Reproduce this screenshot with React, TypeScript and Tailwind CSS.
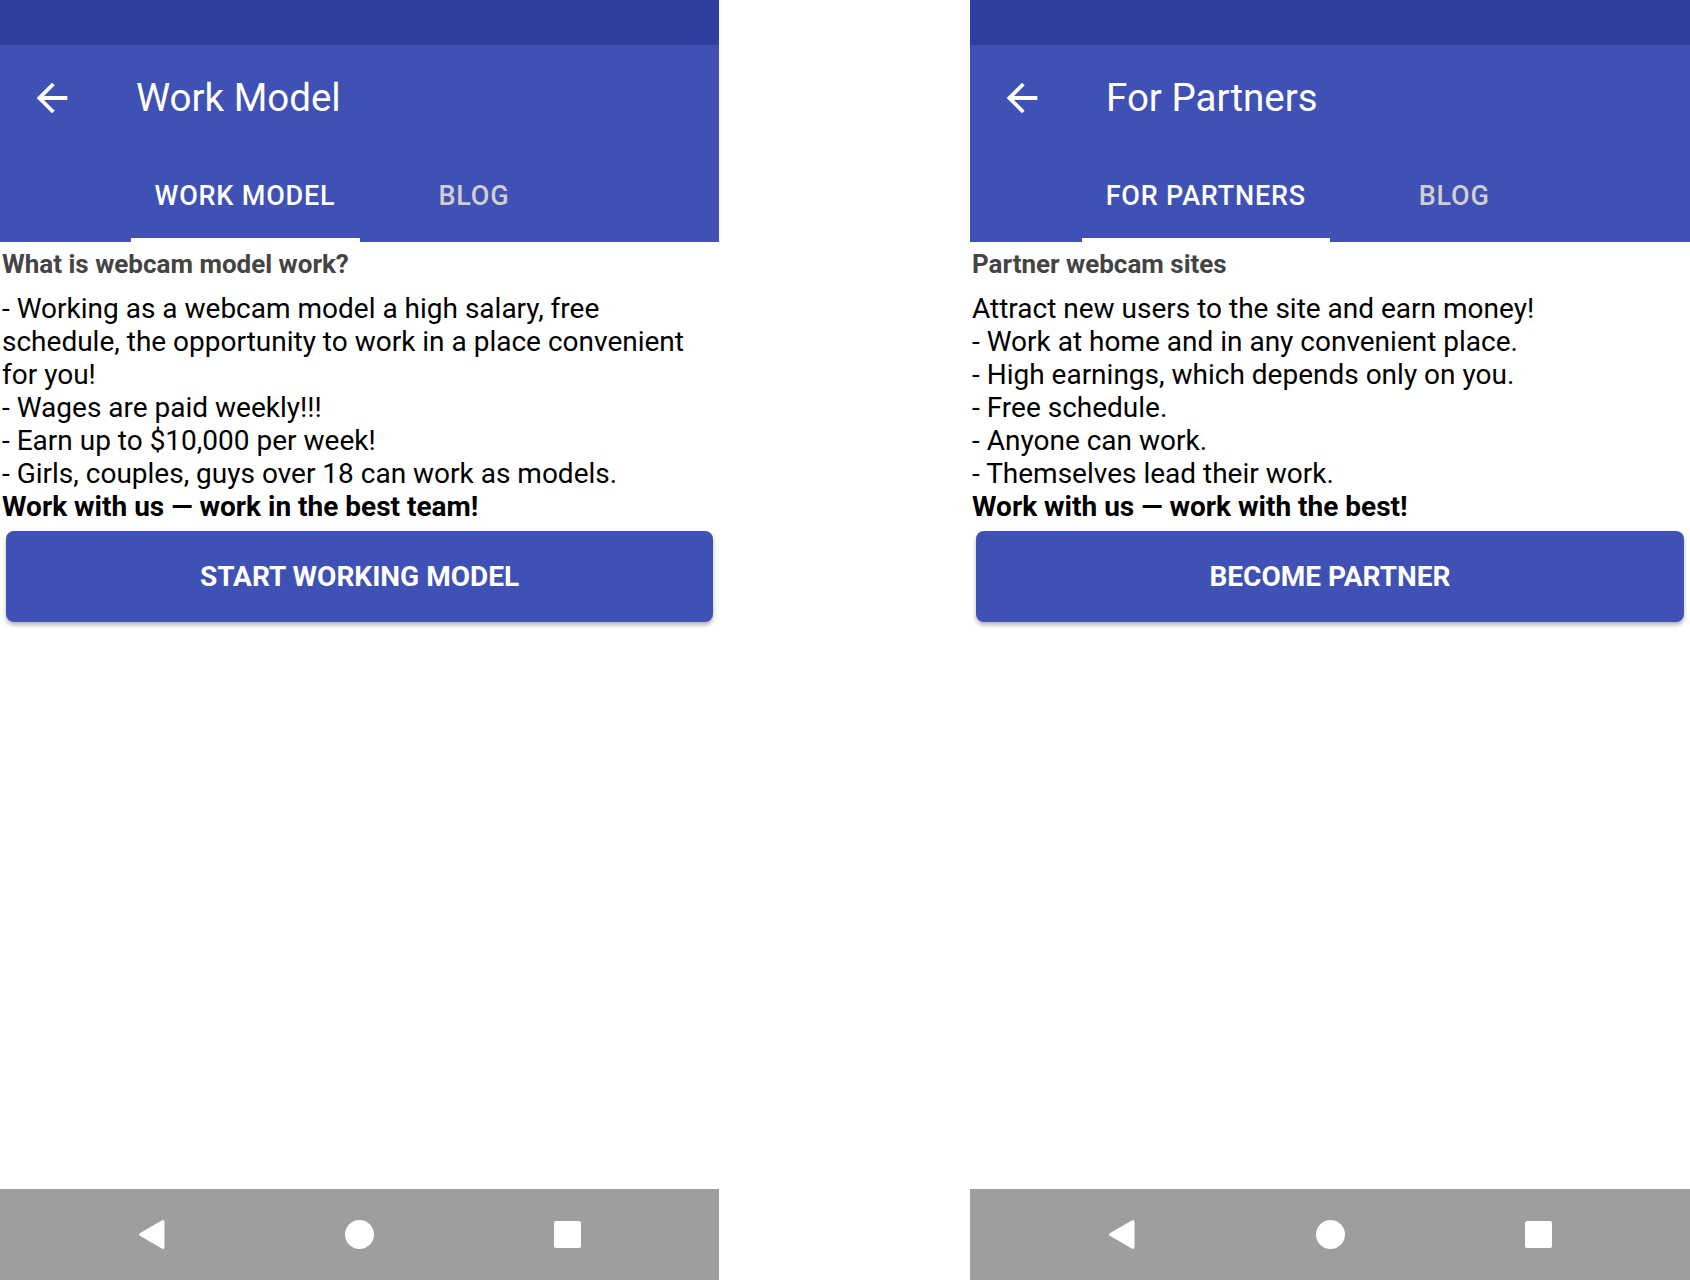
import React from "react";

type Screen = {
  title: string;
  tab: string;
  heading: string;
  lines: string[];
  closing: string;
  button: string;
  width: string;
};

const screens: Screen[] = [
  {
    title: "Work Model",
    tab: "WORK MODEL",
    heading: "What is webcam model work?",
    lines: [
      "- Working as a webcam model a high salary, free schedule, the opportunity to work in a place convenient for you!",
      "- Wages are paid weekly!!!",
      "- Earn up to $10,000 per week!",
      "- Girls, couples, guys over 18 can work as models.",
    ],
    closing: "Work with us — work in the best team!",
    button: "START WORKING MODEL",
    width: "w-[719px]",
  },
  {
    title: "For Partners",
    tab: "FOR PARTNERS",
    heading: "Partner webcam sites",
    lines: [
      "Attract new users to the site and earn money!",
      "- Work at home and in any convenient place.",
      "- High earnings, which depends only on you.",
      "- Free schedule.",
      "- Anyone can work.",
      "- Themselves lead their work.",
    ],
    closing: "Work with us — work with the best!",
    button: "BECOME PARTNER",
    width: "w-[720px]",
  },
];

function BackArrow() {
  return (
    <svg width="46" height="46" viewBox="0 0 24 24" fill="white">
      <path d="M20 11H7.83l5.59-5.59L12 4l-8 8 8 8 1.41-1.41L7.83 13H20v-2z" />
    </svg>
  );
}

function NavBar() {
  return (
    <div className="h-[91px] bg-[#9e9e9e] flex items-center justify-center">
      <div className="w-[208px] flex justify-center">
        <svg width="28" height="31" viewBox="0 0 28 31">
          <path
            d="M25 2.5 L2.5 15.5 L25 28.5 Z"
            fill="white"
            stroke="white"
            strokeWidth="3"
            strokeLinejoin="round"
          />
        </svg>
      </div>
      <div className="w-[208px] flex justify-center">
        <div className="w-[29px] h-[29px] rounded-full bg-white" />
      </div>
      <div className="w-[208px] flex justify-center">
        <div className="w-[27px] h-[27px] rounded-[2px] bg-white" />
      </div>
    </div>
  );
}

function Phone({ s }: { s: Screen }) {
  return (
    <div className={`${s.width} h-[1280px] flex flex-col bg-white shrink-0`}>
      <div className="h-[45px] bg-[#303f9f]" />
      <div className="bg-[#3f51b5]">
        <div className="h-[106px] flex items-center pl-[29px]">
          <BackArrow />
          <span className="ml-[61px] text-white text-[38.5px] leading-none">{s.title}</span>
        </div>
        <div className="h-[91px] flex justify-center">
          <div className="inline-grid grid-flow-col auto-cols-fr">
            <div className="relative flex items-center justify-center px-6">
              <span className="text-white text-[27px] font-medium tracking-[0.03em]">{s.tab}</span>
              <div className="absolute left-0 right-0 bottom-0 h-1 bg-white" />
            </div>
            <div className="flex items-center justify-center px-6">
              <span className="text-[#cfcfcf] text-[27px] font-medium tracking-[0.03em]">BLOG</span>
            </div>
          </div>
        </div>
      </div>
      <div className="flex-1 pt-[6px]">
        <div className="px-[2px]">
          <p className="text-[#444444] text-[26px] font-bold leading-[32px] mb-3">{s.heading}</p>
          {s.lines.map((l) => (
            <p key={l} className="text-black text-[28px] leading-[33px]">
              {l}
            </p>
          ))}
          <p className="text-black text-[28px] font-bold leading-[33px]">{s.closing}</p>
        </div>
        <div className="px-[6px] mt-2">
          <div className="h-[91px] rounded-lg bg-[#3f51b5] shadow-[0_3px_4px_rgba(0,0,0,0.3)] flex items-center justify-center">
            <span className="text-white text-[28px] font-bold">{s.button}</span>
          </div>
        </div>
      </div>
      <NavBar />
    </div>
  );
}

export default function App() {
  return (
    <div
      className="w-[1690px] h-[1280px] bg-white flex gap-[251px] overflow-hidden"
      style={{ fontFamily: "Roboto, 'Liberation Sans', sans-serif" }}
    >
      {screens.map((s) => (
        <Phone key={s.title} s={s} />
      ))}
    </div>
  );
}
